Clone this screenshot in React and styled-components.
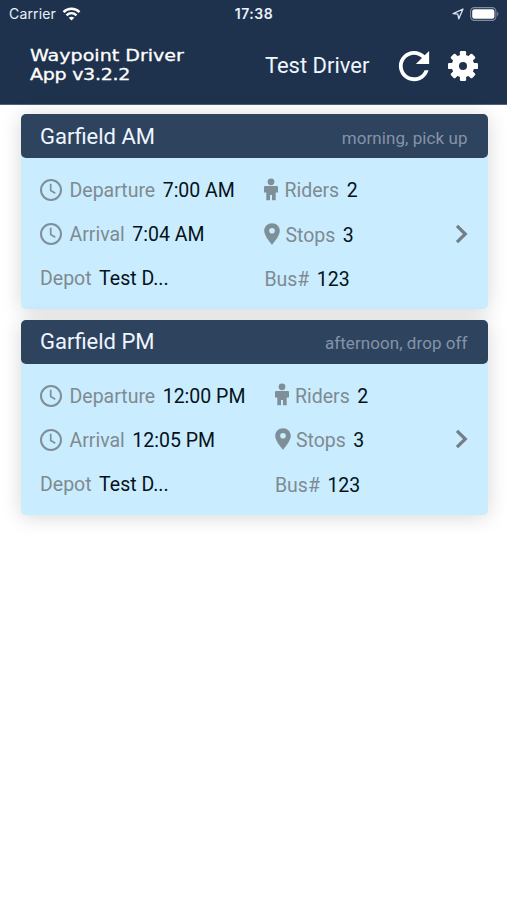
import React from 'react';
import styled, { createGlobalStyle } from 'styled-components';
import { IoMdRefresh } from 'react-icons/io';

const GlobalStyle = createGlobalStyle`
  * {
    box-sizing: border-box;
  }
  body {
    margin: 0;
    background: #fff;
    font-family: Roboto, sans-serif;
  }
`;

const Screen = styled.div`
  min-height: 900px;
  overflow: hidden;
`;

const Header = styled.header`
  height: 105px;
  background: #1f324d;
  color: #fff;
  border-bottom: 1px solid #50617c;
`;

const StatusBar = styled.div`
  display: grid;
  grid-template-columns: 1fr auto 1fr;
  align-items: center;
  height: 27px;
  padding: 0 8px 0 9px;
  font-family: Inter, sans-serif;
  font-size: 14px;
  color: #e9f1fa;
`;

const StatusGroup = styled.div`
  display: flex;
  align-items: center;
  justify-content: ${props => (props.$end ? 'flex-end' : 'flex-start')};
  gap: 6px;
`;

const Carrier = styled.span`
  letter-spacing: 0.15px;
`;

const Time = styled.span`
  font-weight: 600;
  font-size: 14px;
  letter-spacing: 0.5px;
`;

const Nav = styled.div`
  display: flex;
  align-items: center;
  height: 77px;
  padding: 0 29px 0 30px;
`;

const Brand = styled.h1`
  flex: 1;
  margin: 0 0 1px;
  font-family: 'DejaVu Sans', sans-serif;
  font-size: 16.5px;
  font-weight: 400;
  line-height: 19px;
  white-space: nowrap;
  -webkit-text-stroke: 0.3px #fff;
  transform: scaleX(1.155);
  transform-origin: left;
`;

const BrandLine = styled.span`
  display: block;
  letter-spacing: ${props => props.$spacing || 0}px;
`;

const DriverName = styled.span`
  margin-right: 22.5px;
  font-size: 22px;
  line-height: 26px;
  color: #eef6ff;
`;

const IconButton = styled.button`
  display: flex;
  padding: 0;
  border: 0;
  margin-left: ${props => props.$gap || 0}px;
  background: none;
  color: #fff;
`;

const Routes = styled.main`
  display: flex;
  flex-direction: column;
  gap: 10.5px;
  padding: 9.4px 19px 0 20.5px;
`;

const Card = styled.section`
  height: 195px;
  border-radius: 5px;
  background: #c9edff;
  box-shadow: 0 2px 20px rgba(0, 0, 0, 0.16);
`;

const CardTitle = styled.div`
  display: flex;
  align-items: center;
  justify-content: space-between;
  height: 44px;
  padding: 0 20.5px 0 19.5px;
  border-radius: 5px;
  background: #2e435e;
`;

const RouteName = styled.h2`
  margin: 0;
  font-size: 22px;
  font-weight: 400;
  color: #eef6ff;
`;

const RouteType = styled.span`
  padding-top: 3px;
  font-size: 17px;
  letter-spacing: 0.06px;
  color: #8593a8;
`;

const CardBody = styled.div`
  display: flex;
  align-items: center;
  height: 151px;
  padding: 0 20px 0 19.5px;
`;

const Column = styled.div`
  display: flex;
  flex-direction: column;
  align-self: flex-start;
  padding-top: 10.2px;
  margin-right: 29.5px;
`;

const Row = styled.div`
  display: flex;
  align-items: center;
  height: ${props => props.$height || 44}px;
  font-size: 19.5px;
  white-space: nowrap;

  svg {
    margin-right: ${props => props.$iconGap || 0}px;
    margin-bottom: ${props => props.$iconLift || 0}px;
  }
`;

const Label = styled.span`
  color: #7f8a91;
`;

const Value = styled.span`
  margin-left: 7.5px;
  color: #06121a;
`;

const Arrow = styled.div`
  display: flex;
  margin-left: auto;
`;

const Wifi = () => (
  <svg width="19" height="14" viewBox="0 0 18 14" fill="none" stroke="#fff" strokeWidth="2.5">
    <path d="M1 5.1 C5.5 0.6 12.5 0.6 17 5.1" />
    <path d="M4 8.3 C7 5.5 11 5.5 14 8.3" />
    <path d="M9 13.6 L6.2 10.8 Q9 8.5 11.8 10.8 Z" fill="#fff" stroke="none" />
  </svg>
);

const Location = () => (
  <svg width="12" height="12" viewBox="0 0 12 12" fill="none" stroke="#dce6f2" strokeWidth="1.3">
    <path d="M11 1 L1.2 5.6 L5.8 6.2 L6.8 10.8 Z" strokeLinejoin="round" />
  </svg>
);

const Battery = () => (
  <svg width="29" height="14" viewBox="0 0 29 14">
    <rect x="0.6" y="0.6" width="25.3" height="12.8" rx="3.8" fill="none" stroke="#7f8da1" strokeWidth="1.1" />
    <rect x="2.2" y="2.2" width="22.2" height="9.6" rx="2.2" fill="#fff" />
    <path d="M27.2 4.8 Q29.6 7 27.2 9.2 Z" fill="#7f8da1" />
  </svg>
);

const Gear = () => (
  <svg width="30" height="30" viewBox="-15 -15 30 30">
    {[0, 45, 90, 135].map(angle => (
      <rect key={angle} x="-3.1" y="-15" width="6.2" height="30" rx="1.2" fill="#fff" transform={`rotate(${angle})`} />
    ))}
    <circle r="11.3" fill="#fff" />
    <circle r="4" fill="#1f324d" />
  </svg>
);

const Clock = () => (
  <svg width="22" height="22" viewBox="0 0 22 22" fill="none" stroke="#7f8f98">
    <circle cx="11" cy="11" r="10" strokeWidth="2" />
    <path d="M10.7 4.8 V11.5 L15.3 14.2" strokeWidth="1.7" />
  </svg>
);

const Person = () => (
  <svg width="14" height="23" viewBox="0 0 14 23" fill="#7f8f98">
    <circle cx="7" cy="3.8" r="3.4" />
    <path d="M1 8 H13 Q14 8 14 9 V14.5 H11.7 V22.3 H8 V17 H6 V22.3 H2.3 V14.5 H0 V9 Q0 8 1 8 Z" />
  </svg>
);

const Pin = () => (
  <svg width="16" height="22" viewBox="0 0 16 22" fill="#7f8f98">
    <path
      fillRule="evenodd"
      d="M8 0.2 C3.6 0.2 0.2 3.6 0.2 7.8 C0.2 13.4 8 21.8 8 21.8 S15.8 13.4 15.8 7.8 C15.8 3.6 12.4 0.2 8 0.2 Z M8 5 A2.8 2.8 0 1 1 8 10.6 A2.8 2.8 0 1 1 8 5 Z"
    />
  </svg>
);

const Chevron = () => (
  <svg width="13" height="20" viewBox="0 0 13 20" fill="none" stroke="#747e84" strokeWidth="3.2">
    <path d="M2 1.8 L10.3 10 L2 18.2" />
  </svg>
);

const routes = [
  {
    name: 'Garfield AM',
    type: 'morning, pick up',
    departure: '7:00 AM',
    arrival: '7:04 AM',
    depot: 'Test D...',
    riders: 2,
    stops: 3,
    bus: '123'
  },
  {
    name: 'Garfield PM',
    type: 'afternoon, drop off',
    departure: '12:00 PM',
    arrival: '12:05 PM',
    depot: 'Test D...',
    riders: 2,
    stops: 3,
    bus: '123'
  }
];

const RouteCard = ({ route }) => (
  <Card>
    <CardTitle>
      <RouteName>{route.name}</RouteName>
      <RouteType>{route.type}</RouteType>
    </CardTitle>
    <CardBody>
      <Column>
        <Row $iconGap={7.5} $iconLift={0.5}>
          <Clock />
          <Label>Departure</Label>
          <Value>{route.departure}</Value>
        </Row>
        <Row $iconGap={7.5} $iconLift={0.5}>
          <Clock />
          <Label>Arrival</Label>
          <Value>{route.arrival}</Value>
        </Row>
        <Row>
          <Label>Depot</Label>
          <Value>{route.depot}</Value>
        </Row>
      </Column>
      <Column>
        <Row $height={44.4} $iconGap={6} $iconLift={3.5}>
          <Person />
          <Label>Riders</Label>
          <Value>{route.riders}</Value>
        </Row>
        <Row $height={44.8} $iconGap={5} $iconLift={3}>
          <Pin />
          <Label>Stops</Label>
          <Value>{route.stops}</Value>
        </Row>
        <Row>
          <Label>Bus#</Label>
          <Value>{route.bus}</Value>
        </Row>
      </Column>
      <Arrow>
        <Chevron />
      </Arrow>
    </CardBody>
  </Card>
);

const App = () => (
  <Screen>
    <GlobalStyle />
    <Header>
      <StatusBar>
        <StatusGroup>
          <Carrier>Carrier</Carrier>
          <Wifi />
        </StatusGroup>
        <Time>17:38</Time>
        <StatusGroup $end>
          <Location />
          <Battery />
        </StatusGroup>
      </StatusBar>
      <Nav>
        <Brand>
          <BrandLine>Waypoint Driver</BrandLine>
          <BrandLine $spacing={-0.25}>App v3.2.2</BrandLine>
        </Brand>
        <DriverName>Test Driver</DriverName>
        <IconButton aria-label="Refresh">
          <IoMdRefresh size={44} />
        </IconButton>
        <IconButton aria-label="Settings" $gap={12}>
          <Gear />
        </IconButton>
      </Nav>
    </Header>
    <Routes>
      {routes.map(route => (
        <RouteCard key={route.name} route={route} />
      ))}
    </Routes>
  </Screen>
);

export default App;
